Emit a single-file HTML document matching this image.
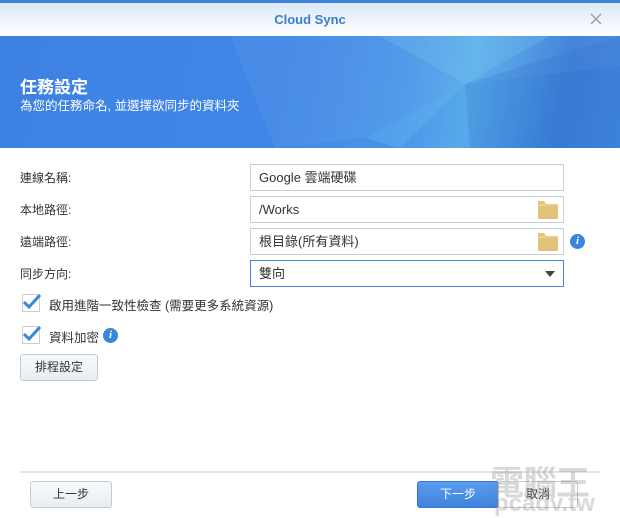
<!DOCTYPE html>
<html><head><meta charset="utf-8"><style>
*{margin:0;padding:0;box-sizing:border-box}
body{width:620px;height:516px;background:#fff;font-family:"Liberation Sans","Noto Sans CJK TC",sans-serif;font-size:12px;color:#333;position:relative;overflow:hidden}
.abs{position:absolute}
.top{left:0;top:0;width:620px;height:3px;background:#3f82dd}
.title{left:0;top:3px;width:620px;height:33px;background:linear-gradient(#dde9f7,#fdfeff);text-align:center;line-height:33px;font-weight:bold;font-size:13px;color:#3f7bd0}
.banner{left:0;top:36px;width:620px;height:112px;background:linear-gradient(100deg,#3d82e2 0%,#3f86e6 45%,#4a95e8 65%,#57aaea 75%,#3a7fd8 90%,#4189e0 100%);overflow:hidden}
.lbl{left:20px;font-size:12px;color:#333}
.inp{left:250px;width:314px;height:27px;border:1px solid #c8ced8;background:#fff;padding-left:8px;line-height:25px;font-size:13px;color:#333}
.fold{position:absolute;right:4px;top:3px;width:22px;height:20px}
.cb{left:22px;width:18px;height:18px;border:1px solid #c9ced6;background:#fff}
.btn{height:27px;border:1px solid #c4cad4;border-radius:3px;background:linear-gradient(#f7f9fc,#e9edf4);text-align:center;line-height:25px;font-size:12px;color:#333}
.info{width:15px;height:15px;border-radius:50%;background:#3b86dd;color:#fff;font:italic bold 11px "Liberation Serif",serif;text-align:center;line-height:15px}
</style></head><body>
<div class="abs top"></div>
<div class="abs title">Cloud Sync</div>
<svg class="abs" style="left:590px;top:13px" width="12" height="12"><path d="M1 1L11 11M11 1L1 11" stroke="#9aa0a8" stroke-width="1.5"/></svg>
<div class="abs banner">
<svg width="620" height="112" style="position:absolute;left:0;top:0">
<polygon points="230,0 620,0 620,30 465,48 365,102 275,112" fill="#ffffff" opacity="0.05"/>
<polygon points="465,48 620,0 620,112 470,112" fill="#2a62c0" opacity="0.18"/>
<polygon points="365,102 465,48 400,112" fill="#6ec0f0" opacity="0.3"/>
<polygon points="380,0 465,48 550,0" fill="#7ccaf0" opacity="0.25"/>
</svg>
<div style="position:absolute;left:20px;top:37px;color:#fff;font-size:17px;font-weight:bold">任務設定</div>
<div style="position:absolute;left:20px;top:59px;color:#fff;font-size:12.5px">為您的任務命名, 並選擇欲同步的資料夾</div>
</div>
<div class="abs lbl" style="top:169px">連線名稱:</div>
<div class="abs lbl" style="top:201px">本地路徑:</div>
<div class="abs lbl" style="top:233px">遠端路徑:</div>
<div class="abs lbl" style="top:265px">同步方向:</div>
<div class="abs inp" style="top:164px">Google 雲端硬碟</div>
<div class="abs inp" style="top:196px">/Works<svg class="fold" viewBox="0 0 22 20"><path d="M1 1h6l2 3h12v15H1z" fill="#e3c27a"/><path d="M1 5h20" stroke="#f2d9a0" stroke-width="1"/></svg></div>
<div class="abs inp" style="top:228px">根目錄(所有資料)<svg class="fold" viewBox="0 0 22 20"><path d="M1 1h6l2 3h12v15H1z" fill="#e3c27a"/><path d="M1 5h20" stroke="#f2d9a0" stroke-width="1"/></svg></div>
<div class="abs info" style="left:570px;top:234px">i</div>
<div class="abs inp" style="top:260px;border-color:#4a86d8">雙向<svg style="position:absolute;right:8px;top:10px" width="10" height="6"><path d="M0 0h10L5 6z" fill="#444"/></svg></div>
<div class="abs cb" style="top:294px"></div>
<svg class="abs" style="left:21px;top:292px" width="22" height="20"><path d="M3 10l5 5L19 3" stroke="#3b82dc" stroke-width="3" fill="none"/></svg>
<div class="abs" style="left:49px;top:295px;font-size:12.5px">啟用進階一致性檢查 (需要更多系統資源)</div>
<div class="abs cb" style="top:326px"></div>
<svg class="abs" style="left:21px;top:324px" width="22" height="20"><path d="M3 10l5 5L19 3" stroke="#3b82dc" stroke-width="3" fill="none"/></svg>
<div class="abs" style="left:49px;top:327px;font-size:12.5px">資料加密</div>
<div class="abs info" style="left:103px;top:328px">i</div>
<div class="abs btn" style="left:20px;top:354px;width:78px">排程設定</div>
<div class="abs" style="left:20px;top:471px;width:580px;height:2px;background:#e2e4e8"></div>
<div class="abs btn" style="left:30px;top:481px;width:82px">上一步</div>
<div class="abs btn" style="left:417px;top:481px;width:82px;background:linear-gradient(#5a9cf0,#3f82dc);border-color:#3a78cc;color:#fff">下一步</div>
<div class="abs btn" style="left:498px;top:481px;width:80px;background:#fff">取消</div>
<div class="abs" style="left:490px;top:456px;font-size:34px;font-weight:bold;color:rgba(130,130,130,0.3);letter-spacing:-1px">電腦王</div>
<div class="abs" style="left:494px;top:490px;font-size:24px;font-weight:bold;color:rgba(130,130,130,0.3)">pcadv.tw</div>
</body></html>
